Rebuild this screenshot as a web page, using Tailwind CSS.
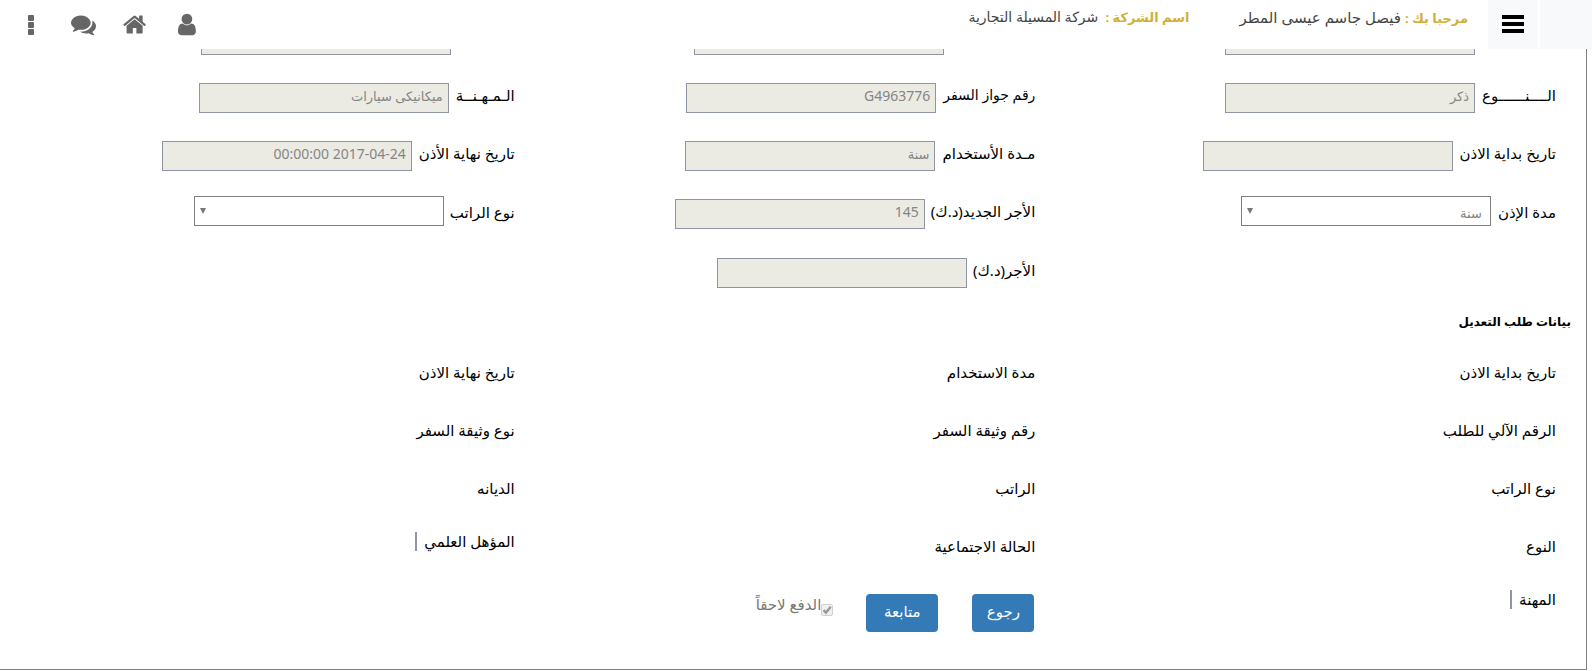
<!DOCTYPE html>
<html lang="ar" dir="rtl">

<head>
  <meta charset="UTF-8">
  <meta name="viewport" content="width=device-width, initial-scale=1">
  <title>بيانات طلب التعديل</title>
  <script src="https://cdn.jsdelivr.net/npm/@tailwindcss/browser@4"></script>
</head>

<body class="bg-white text-black text-[15px] font-['Noto_Sans','DejaVu_Sans',sans-serif]">

  <!-- top bar, stays over the form -->
  <header class="fixed top-0 inset-x-0 z-10 h-[49px] bg-white flex items-stretch">
    <div class="w-[52px] bg-[#f8f9fb]"></div>
    <button type="button" aria-label="القائمة" class="w-[50px] ms-[2px] pb-[2px] bg-[#f8f9fb] flex items-center justify-center">
      <svg class="w-[22px] h-[18px]" viewBox="0 0 22 18"><path d="M0 0h22v4H0zM0 7h22v4H0zM0 14h22v4H0z"/></svg>
    </button>
    <div class="ms-5 flex gap-[50px] leading-[34px] text-[#444] whitespace-nowrap">
      <p><b class="text-[13px] text-[#d4af37]">مرحبا بك :</b> فيصل جاسم عيسى المطر</p>
      <p class="text-[14px]"><b class="text-[13px] text-[#d4af37]">اسم الشركة :</b>&nbsp; شركة المسيلة التجارية</p>
    </div>
    <nav class="ms-auto me-[5px] flex items-center text-[#666]">
      <a href="#" aria-label="حسابي" class="w-[52px] flex justify-center">
        <svg class="h-[25px]" viewBox="0 0 1280 1792" fill="currentColor"><path d="M1280 1399q0 109-62.5 187t-150.5 78h-854q-88 0-150.5-78t-62.5-187q0-85 8.5-160.5t31.5-152 58.5-131 94-89 134.5-34.5q131 128 313 128t313-128q76 0 134.5 34.5t94 89 58.5 131 31.5 152 8.5 160.5zm-256-887q0 159-112.5 271.5t-271.5 112.5-271.5-112.5-112.5-271.5 112.5-271.5 271.5-112.5 271.5 112.5 112.5 271.5z"/></svg>
      </a>
      <a href="#" aria-label="الرئيسية" class="w-[52px] flex justify-center">
        <svg class="h-[25px]" viewBox="0 0 1664 1792" fill="currentColor"><path d="M1408 992v480q0 26-19 45t-45 19h-384v-384h-256v384h-384q-26 0-45-19t-19-45v-480q0-1 .5-3t.5-3l575-474 575 474q1 2 1 6zm223-69l-62 74q-8 9-21 11h-3q-13 0-21-7l-692-577-692 577q-12 8-24 7-13-2-21-11l-62-74q-8-10-7-23.5t11-21.5l719-599q32-26 76-26t76 26l244 204v-195q0-14 9-23t23-9h192q14 0 23 9t9 23v408l219 182q10 8 11 21.5t-7 23.5z"/></svg>
      </a>
      <a href="#" aria-label="الرسائل" class="w-[52px] flex justify-center">
        <svg class="h-[25px]" viewBox="0 0 1792 1792" fill="currentColor"><path d="M1408 768q0 139-94 257t-256.5 186.5-353.5 68.5q-86 0-176-16-124 88-278 128-36 9-86 16h-3q-11 0-20.5-8t-11.5-21q-1-3-1-6.5t.5-6.5 2-6l2.5-5 3.5-5.5 4-5 4.5-5 4-4.5q5-6 23-25t26-29.5 22.5-29 25-38.5 20.5-44q-124-72-195-177t-71-224q0-139 94-257t256.5-186.5 353.5-68.5 353.5 68.5 256.5 186.5 94 257zm384 256q0 120-71 224.5t-195 176.5q10 24 20.5 44t25 38.5 22.5 29 26 29.5 23 25q1 1 4 4.5t4.5 5 4 5 3.5 5.5l2.5 5 2 6 .5 6.5-1 6.5q-3 14-13 22t-22 7q-50-7-86-16-154-40-278-128-90 16-176 16-271 0-472-132 58 4 88 4 161 0 309-45t264-129q125-92 192-212t67-254q0-77-23-152 129 71 204 178t75 230z"/></svg>
      </a>
      <a href="#" aria-label="المزيد" class="w-[52px] flex justify-center">
        <svg class="h-5 w-[6px]" viewBox="0 0 6 20" fill="currentColor"><rect width="6" height="6" rx="1"/><rect y="7" width="6" height="6" rx="1"/><rect y="14" width="6" height="6" rx="1"/></svg>
      </a>
    </nav>
  </header>

  <main class="ms-[5px] border-s border-b border-[#808080] pt-[22px] pb-[23px] ps-[15px] pe-[9px]">
    <form>
      <!-- current permit -->
      <div class="grid grid-cols-3 auto-rows-[58px] leading-[30px] whitespace-nowrap">
        <div class="ps-[15px] flex items-start gap-[7px]">
          <label for="nationality" class="w-[74px]">الجنسيـــة</label>
          <input id="nationality" disabled class="mt-[3px] w-[250px] h-[30px] px-[5px] pb-1 border border-[#9095a5] bg-[#ebebe4] text-[13px] text-[#858585]">
        </div>
        <div class="ps-[15px] flex items-start gap-[7px]">
          <label for="birth" class="w-[84px]">تاريخ الميلاد</label>
          <input id="birth" disabled class="mt-[3px] w-[250px] h-[30px] px-[5px] pb-1 border border-[#9095a5] bg-[#ebebe4] text-[13px] text-[#858585]">
        </div>
        <div class="ps-[15px] flex items-start gap-[7px]">
          <label for="religion" class="w-[57px]">الديـانة</label>
          <input id="religion" disabled class="mt-[3px] w-[250px] h-[30px] px-[5px] pb-1 border border-[#9095a5] bg-[#ebebe4] text-[13px] text-[#858585]">
        </div>

        <div class="ps-[15px] flex items-start gap-[7px]">
          <label for="gender">الــــنــــــوع</label>
          <input id="gender" disabled value="ذكر" class="mt-[3px] w-[250px] h-[30px] px-[5px] pb-1 border border-[#9095a5] bg-[#ebebe4] text-[13px] text-[#858585]">
        </div>
        <div class="ps-[15px] flex items-start gap-[7px]">
          <label for="passport" class="text-[14px]">رقم جواز السفر</label>
          <input id="passport" disabled value="G4963776" class="mt-[3px] w-[250px] h-[30px] px-[5px] pb-1 border border-[#9095a5] bg-[#ebebe4] text-[14px] text-[#858585]">
        </div>
        <div class="ps-[15px] flex items-start gap-[7px]">
          <label for="job">الـمـهـنــة</label>
          <input id="job" disabled value="ميكانيكى سيارات" class="mt-[3px] w-[250px] h-[30px] px-[5px] pb-1 border border-[#9095a5] bg-[#ebebe4] text-[13px] text-[#858585]">
        </div>

        <div class="ps-[15px] flex items-start gap-[7px]">
          <label for="start">تاريخ بداية الاذن</label>
          <input id="start" disabled class="mt-[3px] w-[250px] h-[30px] px-[5px] pb-1 border border-[#9095a5] bg-[#ebebe4] text-[13px] text-[#858585]">
        </div>
        <div class="ps-[15px] flex items-start gap-[7px]">
          <label for="usage">مـدة الأستخدام</label>
          <input id="usage" disabled value="سنة" class="mt-[3px] w-[250px] h-[30px] px-[5px] pb-1 border border-[#9095a5] bg-[#ebebe4] text-[13px] text-[#858585]">
        </div>
        <div class="ps-[15px] flex items-start gap-[7px]">
          <label for="end">تاريخ نهاية الأذن</label>
          <input id="end" disabled value="2017-04-24 00:00:00" class="mt-[3px] w-[250px] h-[30px] px-[5px] pb-1 border border-[#9095a5] bg-[#ebebe4] text-[14px] text-[#858585]">
        </div>

        <div class="ps-[15px] flex items-start gap-[7px] leading-8">
          <label for="period">مدة الإذن</label>
          <div class="relative w-[250px] h-[30px]">
            <select id="period" class="appearance-none block w-full h-full px-2 pt-1 border border-[#7f7f7f] bg-white text-[13px] leading-6 text-[#858585]">
              <option>سنة</option>
            </select>
            <svg class="absolute left-[6px] top-3 w-[6px] h-[6px] pointer-events-none" viewBox="0 0 6 6" fill="#777"><path d="M0 0h6L3 6z"/></svg>
          </div>
        </div>
        <div class="ps-[15px] flex items-start gap-[6px]">
          <label for="newpay">الأجر الجديد(د.ك)</label>
          <input id="newpay" disabled value="145" class="mt-[3px] w-[250px] h-[30px] px-[5px] pb-1 border border-[#9095a5] bg-[#ebebe4] text-[14px] text-[#858585]">
        </div>
        <div class="ps-[15px] flex items-start gap-[6px] leading-8">
          <label for="paytype">نوع الراتب</label>
          <div class="relative w-[250px] h-[30px]">
            <select id="paytype" class="appearance-none block w-full h-full px-2 pt-1 border border-[#7f7f7f] bg-white text-[13px] leading-6 text-[#858585]">
              <option></option>
            </select>
            <svg class="absolute left-[6px] top-3 w-[6px] h-[6px] pointer-events-none" viewBox="0 0 6 6" fill="#777"><path d="M0 0h6L3 6z"/></svg>
          </div>
        </div>

        <div class="col-start-2 ps-[15px] flex items-start gap-[6px] leading-8">
          <label for="pay">الأجر(د.ك)</label>
          <input id="pay" disabled class="mt-1 w-[250px] h-[30px] px-[5px] pb-1 border border-[#9095a5] bg-[#ebebe4] text-[13px] text-[#858585]">
        </div>
      </div>

      <h2 class="mb-6 text-[12px] leading-5 font-bold">بيانات طلب التعديل</h2>

      <!-- requested changes -->
      <div class="grid grid-cols-3 auto-rows-[58px] leading-8 whitespace-nowrap">
        <p class="ps-[15px]">تاريخ بداية الاذن</p>
        <p class="ps-[15px]">مدة الاستخدام</p>
        <p class="ps-[15px]">تاريخ نهاية الاذن</p>

        <p class="ps-[15px]">الرقم الآلي للطلب</p>
        <p class="ps-[15px]">رقم وثيقة السفر</p>
        <p class="ps-[15px]">نوع وثيقة السفر</p>

        <p class="ps-[15px]">نوع الراتب</p>
        <p class="ps-[15px]">الراتب</p>
        <p class="ps-[15px]">الديانه</p>

        <p class="ps-[15px]">النوع</p>
        <p class="ps-[15px]">الحالة الاجتماعية</p>
        <div class="ps-[15px] flex items-start gap-[7px] leading-[22px]">
          <span>المؤهل العلمي</span>
          <span class="mt-[2px] w-[2px] h-[19px] bg-[#9095a5]"></span>
        </div>

        <div class="ps-[15px] flex items-start gap-[7px] leading-[22px]">
          <span>المهنة</span>
          <span class="mt-[2px] w-[2px] h-[19px] bg-[#9095a5]"></span>
        </div>
        <div class="ps-4 pt-[6px] flex items-start">
          <button type="button" class="w-[62px] h-[38px] pb-1 rounded bg-[#337ab7] text-white">رجوع</button>
          <button type="submit" class="ms-[34px] w-[72px] h-[38px] pb-1 rounded bg-[#337ab7] text-white">متابعة</button>
          <div class="ms-[33px] flex items-start leading-5 text-[#777]">
            <span class="relative mt-[10px] w-3 h-3">
              <input id="later" type="checkbox" checked disabled class="appearance-none block w-3 h-3 rounded-[2px] border border-[#d0d0d0] bg-[#f0f0f0]">
              <svg class="absolute inset-0 w-3 h-3 pointer-events-none" viewBox="0 0 12 12" fill="none" stroke="#999" stroke-width="2.4"><path d="M2.5 6.2l2.4 2.4L9.7 2.8"/></svg>
            </span>
            <label for="later">الدفع لاحقاً</label>
          </div>
        </div>
      </div>
    </form>
  </main>

</body>

</html>
